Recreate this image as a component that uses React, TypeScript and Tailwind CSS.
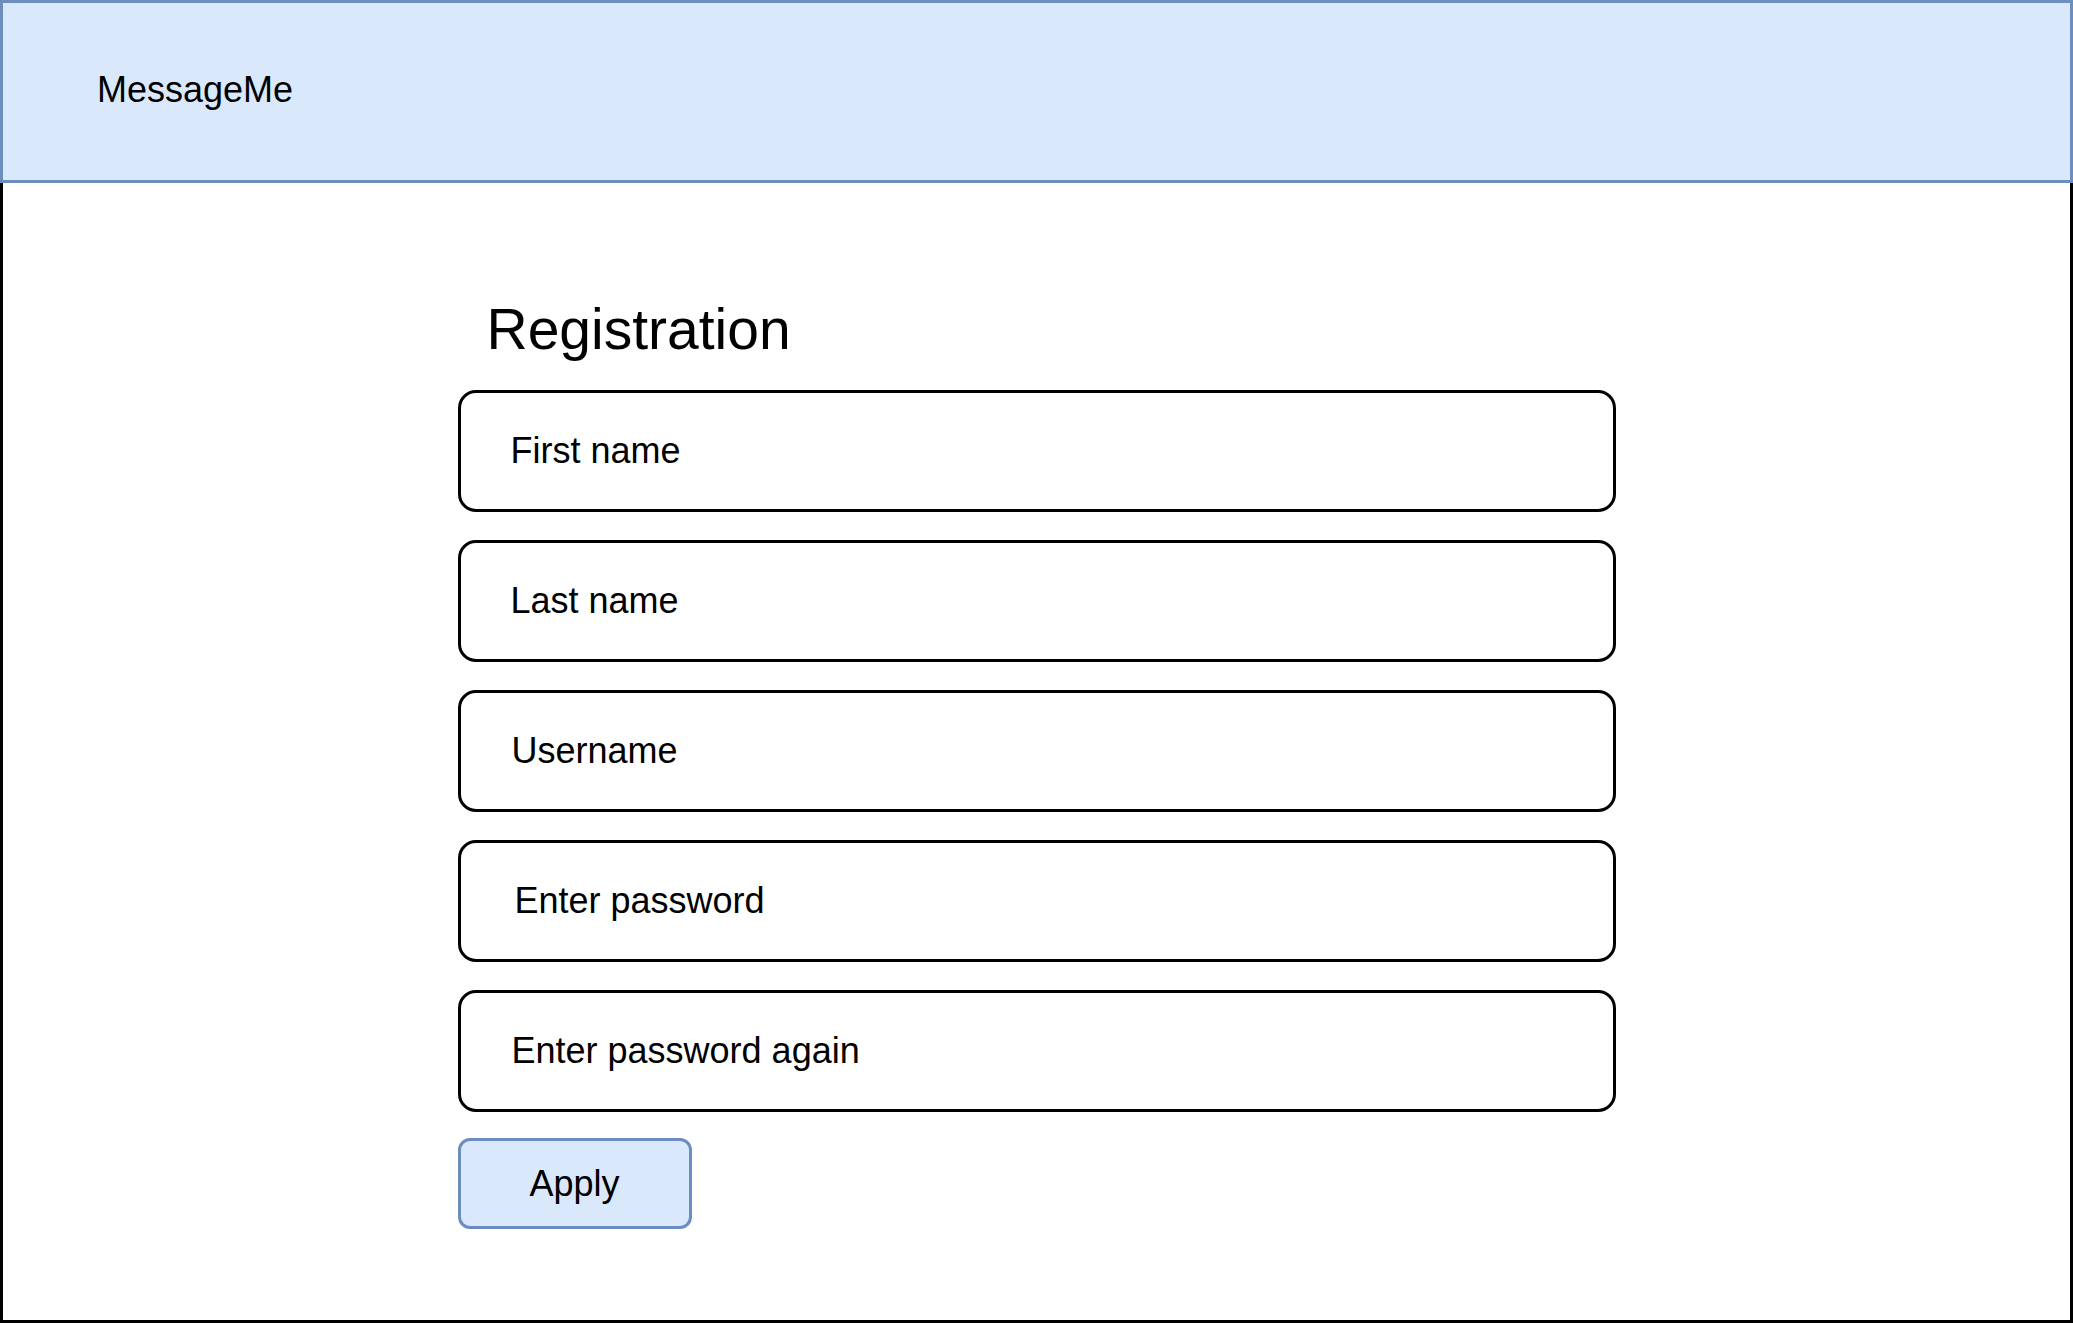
const fields = [
  { label: "First name", pad: "pl-[50px]" },
  { label: "Last name", pad: "pl-[50px]" },
  { label: "Username", pad: "pl-[51px]" },
  { label: "Enter password", pad: "pl-[54px]" },
  { label: "Enter password again", pad: "pl-[51px]" },
];

const App = () => {
  return (
    <div className="w-[2073px] h-[1323px] flex flex-col bg-white text-black font-['Liberation_Sans',Arial,sans-serif]">
      {/* Top bar */}
      <header className="h-[183px] shrink-0 flex items-center pl-[94px] pb-[4px] bg-[#dae8fc] border-[3px] border-[#6c8ebf]">
        <span className="text-[36px] leading-none">MessageMe</span>
      </header>

      {/* Form area */}
      <main className="flex-1 border-[3px] border-t-0 border-black pt-[114px]">
        <div className="w-[1158px] mx-auto flex flex-col">
          <h1 className="pl-[29px] text-[57px] leading-[64px] font-normal">Registration</h1>

          <div className="mt-[29px] flex flex-col gap-[28px]">
            {fields.map((f) => (
              <div
                key={f.label}
                className={`h-[122px] flex items-center border-[3px] border-black rounded-[18px] ${f.pad}`}
              >
                <span className="text-[36px]">{f.label}</span>
              </div>
            ))}
          </div>

          <button className="mt-[26px] w-[234px] h-[91px] flex items-center justify-center bg-[#dae8fc] border-[3px] border-[#6c8ebf] rounded-[12px] text-[36px]">
            Apply
          </button>
        </div>
      </main>
    </div>
  );
};

export default App;
